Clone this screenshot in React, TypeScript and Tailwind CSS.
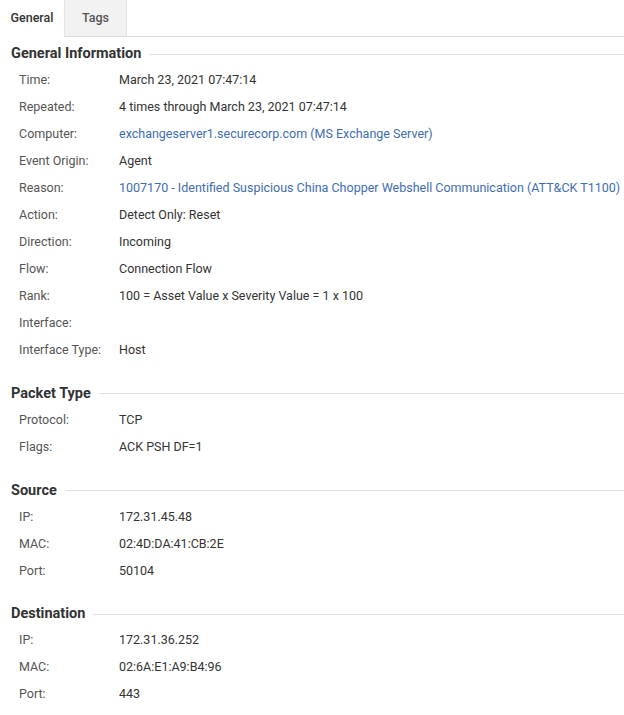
import React from "react";

type Row = { label: string; value: string; link?: boolean };

const sections: { title: string; rows: Row[] }[] = [
  {
    title: "General Information",
    rows: [
      { label: "Time:", value: "March 23, 2021 07:47:14" },
      { label: "Repeated:", value: "4 times through March 23, 2021 07:47:14" },
      { label: "Computer:", value: "exchangeserver1.securecorp.com (MS Exchange Server)", link: true },
      { label: "Event Origin:", value: "Agent" },
      { label: "Reason:", value: "1007170 - Identified Suspicious China Chopper Webshell Communication (ATT&CK T1100)", link: true },
      { label: "Action:", value: "Detect Only: Reset" },
      { label: "Direction:", value: "Incoming" },
      { label: "Flow:", value: "Connection Flow" },
      { label: "Rank:", value: "100 = Asset Value x Severity Value = 1 x 100" },
      { label: "Interface:", value: "" },
      { label: "Interface Type:", value: "Host" },
    ],
  },
  {
    title: "Packet Type",
    rows: [
      { label: "Protocol:", value: "TCP" },
      { label: "Flags:", value: "ACK PSH DF=1" },
    ],
  },
  {
    title: "Source",
    rows: [
      { label: "IP:", value: "172.31.45.48" },
      { label: "MAC:", value: "02:4D:DA:41:CB:2E" },
      { label: "Port:", value: "50104" },
    ],
  },
  {
    title: "Destination",
    rows: [
      { label: "IP:", value: "172.31.36.252" },
      { label: "MAC:", value: "02:6A:E1:A9:B4:96" },
      { label: "Port:", value: "443" },
    ],
  },
];

export default function App() {
  return (
    <div className="w-[624px] h-[715px] bg-white overflow-hidden" style={{ fontFamily: "Roboto, 'Liberation Sans', sans-serif" }}>
      <div className="flex h-[37px] border-b border-[#dcdcdc]">
        <div className="w-[65px] flex items-center justify-center text-[12.5px] font-medium text-[#333] bg-white border-r border-[#e4e4e4] -mb-px">
          General
        </div>
        <div className="w-[62px] flex items-center justify-center text-[12.5px] font-medium text-[#555] bg-[#f2f2f2] border-r border-[#e0e0e0]">
          Tags
        </div>
      </div>
      <div className="flex flex-col">
        {sections.map((s, i) => (
          <div key={s.title} className={i === 0 ? "mt-[4px]" : "mt-[16.7px]"}>
            <div className="flex items-center h-[26px] pl-[11px]">
              <span className="text-[14.5px] font-bold text-[#333] whitespace-nowrap">{s.title}</span>
              <div className="flex-1 h-px bg-[#e0e0e0] ml-[8px]" />
            </div>
            {s.rows.map((r) => (
              <div key={r.label} className="flex items-center h-[27px] text-[12.5px] whitespace-nowrap">
                <div className="w-[119px] pl-[19px] text-[#555]">{r.label}</div>
                <div className={r.link ? "text-[#3e6db3]" : "text-[#333]"}>{r.value}</div>
              </div>
            ))}
          </div>
        ))}
      </div>
    </div>
  );
}
